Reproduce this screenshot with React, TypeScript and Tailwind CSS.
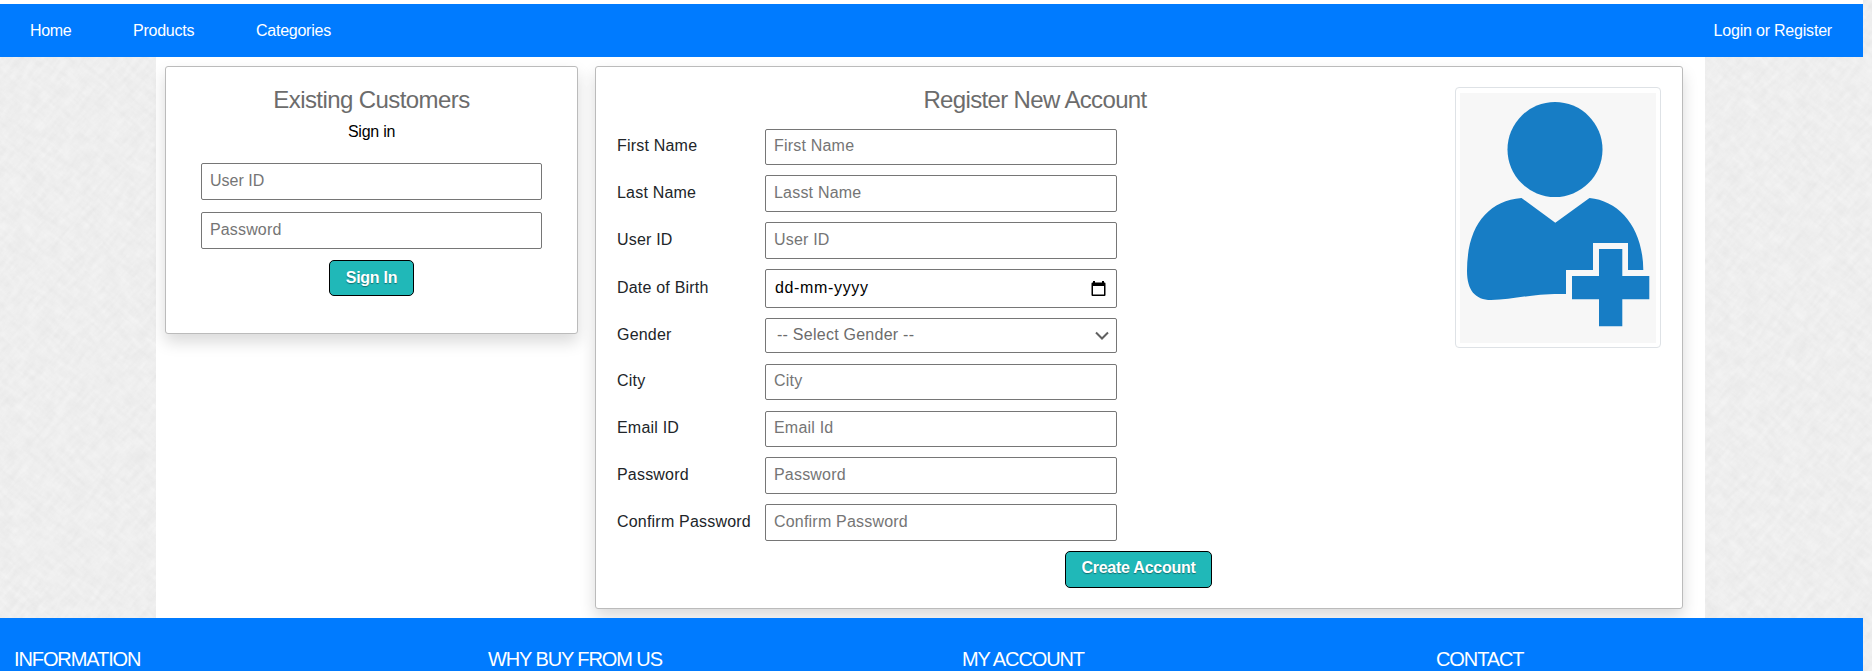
import React from "react";

type Field = {
  label: string;
  placeholder: string;
  kind?: "text" | "date" | "select" | "password";
  mt: string;
  h: string;
};

const fields: Field[] = [
  { label: "First Name", placeholder: "First Name", mt: "mt-0", h: "h-9" },
  { label: "Last Name", placeholder: "Lasst Name", mt: "mt-[10px]", h: "h-[37px]" },
  { label: "User ID", placeholder: "User ID", mt: "mt-[10px]", h: "h-[37px]" },
  { label: "Date of Birth", placeholder: "dd-mm-yyyy", kind: "date", mt: "mt-[10px]", h: "h-[39px]" },
  { label: "Gender", placeholder: "-- Select Gender --", kind: "select", mt: "mt-[10px]", h: "h-[35px]" },
  { label: "City", placeholder: "City", mt: "mt-[11px]", h: "h-9" },
  { label: "Email ID", placeholder: "Email Id", mt: "mt-[11px]", h: "h-9" },
  { label: "Password", placeholder: "Password", kind: "password", mt: "mt-[10px]", h: "h-[37px]" },
  { label: "Confirm Password", placeholder: "Confirm Password", kind: "password", mt: "mt-[10px]", h: "h-[37px]" },
];

const box = "border border-[#767676] rounded-[2px] bg-white text-base";

function PaperTexture() {
  return (
    <svg className="absolute inset-0 -z-10 h-full w-full" aria-hidden="true">
      <filter id="grainA" x="0" y="0" width="100%" height="100%">
        <feTurbulence type="fractalNoise" baseFrequency="0.05 0.22" numOctaves={3} seed={4} />
        <feColorMatrix values="0 0 0 0 0  0 0 0 0 0  0 0 0 0 0  0.045 0 0 0 -0.012" />
      </filter>
      <filter id="grainB" x="0" y="0" width="100%" height="100%">
        <feTurbulence type="fractalNoise" baseFrequency="0.05 0.22" numOctaves={3} seed={9} />
        <feColorMatrix values="0 0 0 0 0  0 0 0 0 0  0 0 0 0 0  0.04 0 0 0 -0.01" />
      </filter>
      <rect width="100%" height="100%" fill="#f3f3f3" />
      <g transform="rotate(-48 936 335)">
        <rect x="-200" y="-900" width="2300" height="2500" filter="url(#grainA)" />
      </g>
      <g transform="rotate(42 936 335)">
        <rect x="-200" y="-900" width="2300" height="2500" filter="url(#grainB)" />
      </g>
    </svg>
  );
}

function FieldControl({ field }: { field: Field }) {
  if (field.kind === "date") {
    return (
      <div className={`${box} ${field.h} w-[352px] flex items-center justify-between pl-[9px] pr-[9px] text-black`}>
        <span className="pb-[2px] tracking-[0.65px]">{field.placeholder}</span>
        <svg className="h-[17px] w-[17px]" viewBox="0 0 17 17" aria-hidden="true">
          <path fill="#000" d="M3 1h2v1.500h7V1h2v1.500h.5q1 0 1 1V15q0 1-1 1h-12q-1 0-1-1V3.500q0-1 1-1H3zM3 6v8.500h11V6z" fillRule="evenodd" />
        </svg>
      </div>
    );
  }
  if (field.kind === "select") {
    return (
      <div className={`${box} ${field.h} w-[352px] flex items-center justify-between pl-[11px] pr-[7px] text-[#6c6c6c]`}>
        <span className="pb-px tracking-[0.25px]">{field.placeholder}</span>
        <svg className="h-[14px] w-[14px]" viewBox="0 0 14 14" fill="none" stroke="#606060" strokeWidth="2" aria-hidden="true">
          <path d="M1 3.500l6 6 6-6" />
        </svg>
      </div>
    );
  }
  return (
    <input
      type={field.kind ?? "text"}
      placeholder={field.placeholder}
      className={`${box} ${field.h} w-[352px] px-2 pb-[2px] tracking-[0.2px] placeholder:text-[#757575]`}
    />
  );
}

function UserAddPicture() {
  return (
    <svg className="h-[250px] w-[196px] bg-[#f7f7f7]" viewBox="0 0 196 250" aria-hidden="true">
      <g fill="#177dc5">
        <circle cx="95" cy="56.500" r="47.500" />
        <path d="M61.500 105L95.300 129.800L129.500 105C160 108 183 135 183.300 177H168V150H133V177H106V201C72 200 53 207 31 207C15 207 7 197 7 178C7 134 27 108 61.500 105Z" />
        <path d="M139 156h23.300v27H189.300v23.300H162.300v27H139v-27H112v-23.300h27z" />
      </g>
    </svg>
  );
}

export default function App() {
  return (
    <div className="relative isolate h-[671px] w-full overflow-hidden font-['Liberation_Sans',Arial,sans-serif] text-base leading-6 text-[#212529]">
      <PaperTexture />
      <div className="flex h-full w-[1863px] flex-col">
        <nav className="flex h-[57px] shrink-0 items-center justify-between border-t-4 border-white bg-[#007bff] pl-[30px] pr-[31px] text-white">
          <div className="flex">
            <a className="w-[103px] tracking-[-0.35px]">Home</a>
            <a className="w-[123px] tracking-[-0.25px]">Products</a>
            <a className="tracking-[-0.25px]">Categories</a>
          </div>
          <a className="tracking-[-0.2px]">Login or Register</a>
        </nav>

        <main className="relative -z-[1] ml-[156px] flex h-[561px] w-[1549px] shrink-0 items-start bg-white pl-[9px] pt-[9px]">
          <section className="flex h-[268px] w-[413px] flex-col items-center rounded-[3px] border border-[#bbb] bg-white pt-[19px] shadow-[0_8px_16px_rgba(0,0,0,0.15)]">
            <h2 className="text-2xl leading-7 tracking-[-0.58px] text-[#6c6c6c]">Existing Customers</h2>
            <p className="mt-[6px] tracking-[-0.25px] text-black">Sign in</p>
            <input placeholder="User ID" className={`${box} mt-[19px] h-[37px] w-[341px] px-2 pb-[2px] placeholder:text-[#757575]`} />
            <input type="password" placeholder="Password" className={`${box} mt-[12px] h-[37px] w-[341px] px-2 pb-[2px] tracking-[0.15px] placeholder:text-[#757575]`} />
            <button className="mt-[11px] h-9 w-[85px] rounded-[5px] border border-black bg-[#20b8b8] pb-px font-bold tracking-[-0.25px] text-white [text-shadow:0_1px_1px_rgba(0,0,0,0.4)]">
              Sign In
            </button>
          </section>

          <section className="ml-[17px] flex h-[543px] w-[1088px] rounded-[3px] border border-[#bbb] bg-white pl-[21px] shadow-[0_8px_16px_rgba(0,0,0,0.15)]">
            <div className="flex w-[838px] flex-col pt-[19px]">
              <h2 className="pr-[2px] text-center text-2xl leading-7 tracking-[-0.65px] text-[#6c6c6c]">Register New Account</h2>
              <div className="mt-[15px]">
                {fields.map((f) => (
                  <div key={f.label} className={`flex items-center ${f.mt}`}>
                    <label className="w-[148px] whitespace-nowrap pb-[2px] tracking-[0.2px]">{f.label}</label>
                    <FieldControl field={f} />
                  </div>
                ))}
              </div>
              <button className="ml-[448px] mt-[10px] h-[37px] w-[147px] rounded-[5px] border border-black bg-[#20b8b8] pb-[3px] font-bold tracking-[-0.25px] text-white [text-shadow:0_1px_1px_rgba(0,0,0,0.4)]">
                Create Account
              </button>
            </div>
            <div className="mt-[20px] flex h-[261px] w-[206px] items-center justify-center rounded-[4px] border border-[#dee2e6] bg-white">
              <UserAddPicture />
            </div>
          </section>
        </main>

        <footer className="flex h-[53px] shrink-0 items-start overflow-hidden bg-[#007bff] pl-[14px] pt-[30px] text-xl leading-[22px] text-white">
          {["INFORMATION", "WHY BUY FROM US", "MY ACCOUNT", "CONTACT"].map((t) => (
            <h3 key={t} className="w-[474px] shrink-0 whitespace-nowrap tracking-[-1.1px]">
              {t}
            </h3>
          ))}
        </footer>
      </div>
    </div>
  );
}
